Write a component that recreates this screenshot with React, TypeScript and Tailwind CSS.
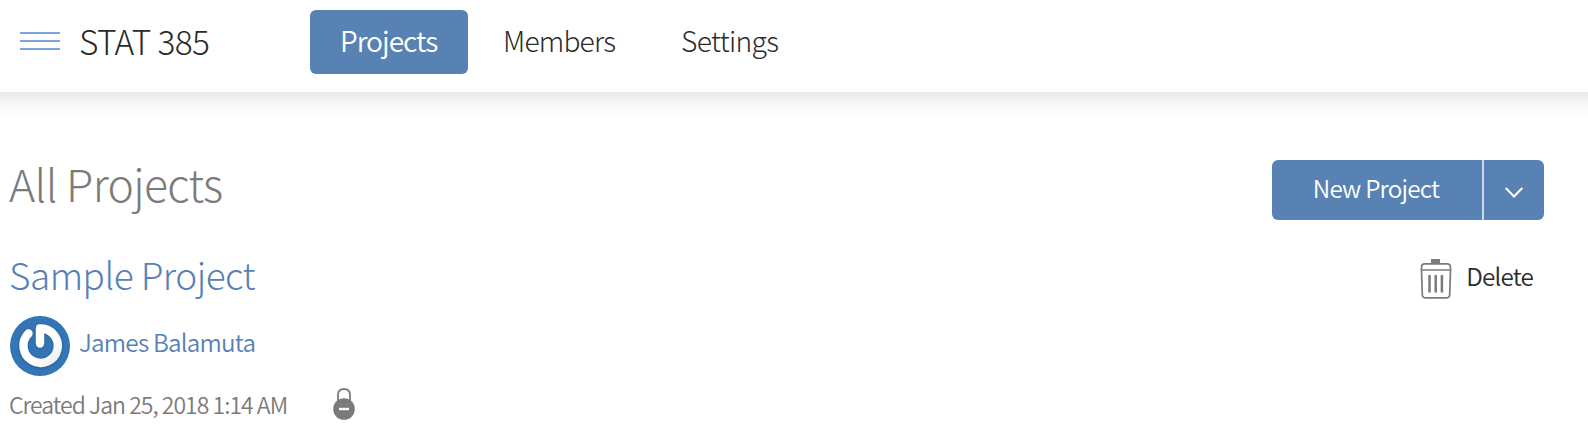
const navItem = "flex h-16 items-start rounded-md pt-[10px] text-[28.250px] leading-10 whitespace-nowrap";

function Avatar() {
  return (
    <svg width="60" height="60" viewBox="0 0 60 60" className="shrink-0">
      <defs>
        <filter id="soft" x="-20%" y="-20%" width="140%" height="140%">
          <feDropShadow dx="0" dy="0.5" stdDeviation="1" floodColor="#123c66" floodOpacity="0.6" />
        </filter>
        <linearGradient id="ring" gradientUnits="userSpaceOnUse" x1="10" y1="10" x2="50" y2="50">
          <stop offset="0.6" stopColor="#ffffff" />
          <stop offset="1" stopColor="#e8e8e8" />
        </linearGradient>
      </defs>
      <circle cx="30" cy="30" r="30" fill="#3375b5" />
      <path
        d="M18.500 17.500A17.200 17.200 0 1 0 30 12.500V27.500"
        fill="none"
        stroke="url(#ring)"
        strokeWidth="8.300"
        strokeLinecap="round"
        strokeLinejoin="round"
        filter="url(#soft)"
      />
    </svg>
  );
}

function Trash() {
  return (
    <svg width="32" height="40" viewBox="0 0 32 40" fill="none" stroke="#7b7b7b" className="shrink-0">
      <rect x="11" y="0" width="9" height="4" fill="#7b7b7b" stroke="none" />
      <path d="M1.500 11V8.500Q1.500 4.800 4.500 4.800H27Q30.500 4.800 30.500 8.500V11Z" strokeWidth="1.700" />
      <path d="M1.500 11L2.300 36Q2.500 38.800 5 38.800H27Q29.500 38.800 29.700 36L30.500 11" strokeWidth="1.700" />
      <path d="M9.500 16V33.500M15.700 16V33.500M21.900 16V33.500" strokeWidth="2.500" />
    </svg>
  );
}

function Lock() {
  return (
    <svg width="22" height="32" viewBox="0 0 22 32" className="shrink-0">
      <path d="M5 14V7Q5 1 11 1Q17 1 17 7V14" fill="none" stroke="#7b7b7b" strokeWidth="1.800" />
      <circle cx="11" cy="21" r="10.800" fill="#7b7b7b" />
      <path d="M6 21H16" stroke="#fff" strokeWidth="2.400" />
    </svg>
  );
}

export default function App() {
  return (
    <div className="h-[440px] w-full overflow-hidden bg-white font-['Noto_Sans_CJK_SC',sans-serif] font-light text-[#2b2b2b]">
      <header className="flex h-[92px] items-start pt-[10px] pl-5">
        <button aria-label="Menu" className="mt-[22px] flex w-10 shrink-0 flex-col gap-[6px]">
          <span className="h-[2px] w-full bg-[#7da6d8]" />
          <span className="h-[2px] w-full bg-[#7da6d8]" />
          <span className="h-[2px] w-full bg-[#7da6d8]" />
        </button>
        <h1 className="ml-[19px] w-[231px] pt-[11px] text-[33.500px] leading-10 tracking-[-0.650px] whitespace-nowrap">STAT 385</h1>
        <nav className="flex">
          <a className={`${navItem} w-[158px] bg-[#5882b3] pl-[30px] font-[350] tracking-[-1.020px] text-white`}>Projects</a>
          <a className={`${navItem} ml-[35px] w-[143px] tracking-[-0.850px]`}>Members</a>
          <a className={`${navItem} ml-[35px] tracking-[-0.650px]`}>Settings</a>
        </nav>
      </header>
      <div className="h-[28px] bg-linear-to-b from-[#e9e9e9] via-[#f8f8f8] to-white" />
      <main className="pr-11 pl-[10px]">
        <div className="flex h-[130px] items-start justify-between pt-10">
          <h2 className="-ml-px text-[44.500px] leading-[46px] tracking-[-0.650px] whitespace-nowrap text-[#7b7b7b]">All Projects</h2>
          <div className="flex h-[60px] w-[272px] overflow-hidden rounded-md bg-[#5882b3] text-white">
            <button className="w-[210px] pr-[2px] pb-1 text-[24.250px] leading-[56px] font-[350] tracking-[-0.780px] whitespace-nowrap">New Project</button>
            <button aria-label="More" className="flex flex-1 items-center justify-center border-l-2 border-[#cbd8e7]">
              <svg width="18" height="11" viewBox="0 0 18 11" fill="none" stroke="white" strokeWidth="2" className="mt-1">
                <path d="M.700 1L9 9.500L17.300 1" />
              </svg>
            </button>
          </div>
        </div>
        <section>
          <div className="flex h-[66px] items-start justify-between">
            <a className="-ml-px pt-px text-[37px] leading-[46px] tracking-[-0.530px] whitespace-nowrap text-[#5880b8]">Sample Project</a>
            <button className="mt-[9px] flex pr-[11px] text-[24.250px]">
              <Trash />
              <span className="ml-[14px] leading-[33px] font-[350] tracking-[-0.800px] whitespace-nowrap">Delete</span>
            </button>
          </div>
          <div className="flex h-[60px] items-start text-[24.250px] text-[#5880b8]">
            <Avatar />
            <span className="ml-[9px] pt-[6px] leading-10 font-[350] tracking-[-0.780px] whitespace-nowrap">James Balamuta</span>
          </div>
          <div className="flex items-start pt-[12px] text-[23px] text-[#7b7b7b]">
            <span className="-ml-px w-[324px] pt-[4px] leading-6 font-[350] tracking-[-0.980px] whitespace-nowrap">Created Jan 25, 2018 1:14 AM</span>
            <Lock />
          </div>
        </section>
      </main>
    </div>
  );
}
